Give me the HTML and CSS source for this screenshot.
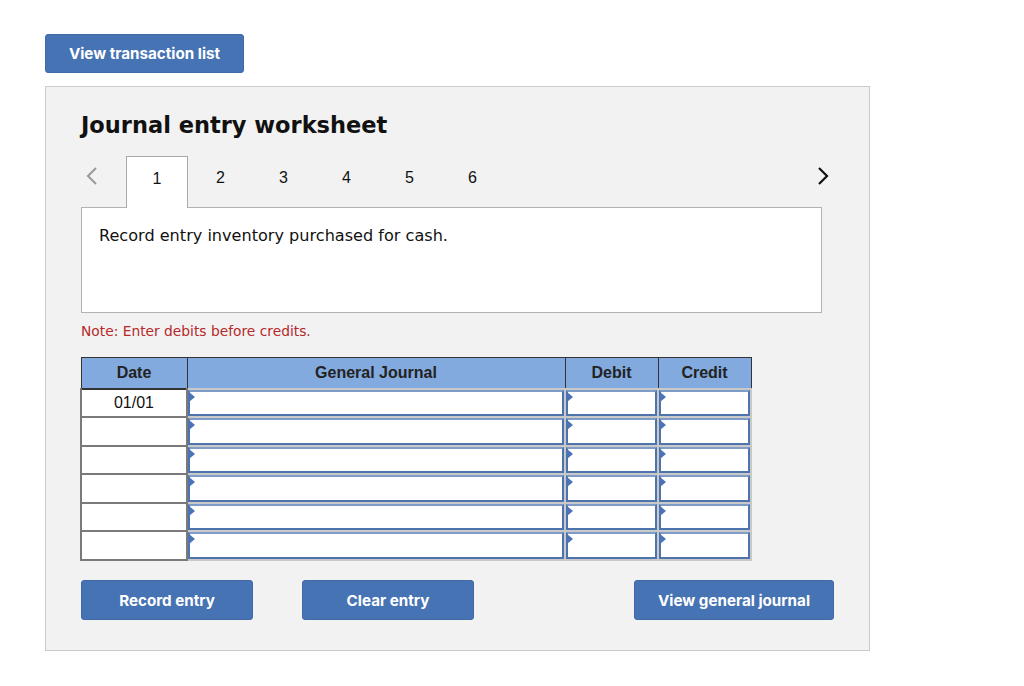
FILE: index.html
```html
<!DOCTYPE html>
<html>
<head>
<meta charset="utf-8">
<link rel="stylesheet" href="styles.css">
</head>
<body>
<div class="page">
  <button class="btn btn-top">View transaction list</button>
  <div class="panel">
    <h1 class="title">Journal entry worksheet</h1>
    <div class="tabs">
      <span class="arrow arrow-left"><svg width="12" height="20" viewBox="0 0 12 20"><path d="M10 2 L2 10 L10 18" fill="none" stroke="#999" stroke-width="2"/></svg></span>
      <div class="tab active">1</div>
      <div class="tab">2</div>
      <div class="tab">3</div>
      <div class="tab">4</div>
      <div class="tab">5</div>
      <div class="tab">6</div>
      <span class="spacer"></span>
      <span class="arrow arrow-right"><svg width="12" height="20" viewBox="0 0 12 20"><path d="M2 2 L10 10 L2 18" fill="none" stroke="#111" stroke-width="2.2"/></svg></span>
    </div>
    <div class="desc">Record entry inventory purchased for cash.</div>
    <p class="note">Note: Enter debits before credits.</p>
    <table class="journal">
      <thead>
        <tr><th class="c-date">Date</th><th class="c-gj">General Journal</th><th class="c-num">Debit</th><th class="c-num">Credit</th></tr>
      </thead>
      <tbody>
        <tr><td class="date">01/01</td><td class="in"><div class="box"></div></td><td class="in"><div class="box"></div></td><td class="in"><div class="box"></div></td></tr>
        <tr><td class="date"></td><td class="in"><div class="box"></div></td><td class="in"><div class="box"></div></td><td class="in"><div class="box"></div></td></tr>
        <tr><td class="date"></td><td class="in"><div class="box"></div></td><td class="in"><div class="box"></div></td><td class="in"><div class="box"></div></td></tr>
        <tr><td class="date"></td><td class="in"><div class="box"></div></td><td class="in"><div class="box"></div></td><td class="in"><div class="box"></div></td></tr>
        <tr><td class="date"></td><td class="in"><div class="box"></div></td><td class="in"><div class="box"></div></td><td class="in"><div class="box"></div></td></tr>
        <tr><td class="date"></td><td class="in"><div class="box"></div></td><td class="in"><div class="box"></div></td><td class="in"><div class="box"></div></td></tr>
      </tbody>
    </table>
    <div class="actions">
      <button class="btn btn-action">Record entry</button>
      <button class="btn btn-action btn-clear">Clear entry</button>
      <span class="spacer"></span>
      <button class="btn btn-view">View general journal</button>
    </div>
  </div>
</div>
</body>
</html>
```
FILE: styles.css
```css
* { box-sizing: border-box; }
html, body { margin: 0; padding: 0; background: #fff; }
.page {
  padding: 34px 0 0 45px;
  font-family: "Liberation Sans", Arial, sans-serif;
}
.btn {
  background: #4673b3;
  color: #fff;
  border: 1px solid #4069a6;
  border-radius: 3px;
  font-family: Inter, "Liberation Sans", Arial, sans-serif;
  font-weight: 700;
  font-size: 15.2px;
  cursor: pointer;
  padding: 0;
}
.btn-top { width: 199px; height: 39px; display: block; }
.panel {
  margin-top: 13px;
  width: 825px;
  height: 565px;
  background: #f2f2f2;
  border: 1px solid #cbcbcb;
  padding: 0 35px 0 35px;
}
.title {
  font-family: "DejaVu Sans", Verdana, sans-serif;
  font-weight: bold;
  font-size: 22.5px;
  margin: 25px 0 0 0;
  height: 44px;
  line-height: 26px;
  color: #111;
}
.tabs {
  display: flex;
  align-items: stretch;
  height: 51px;
  width: 748px;
}
.arrow { display: flex; align-items: center; height: 39px; }
.arrow-left { width: 45px; padding-left: 5px; }
.arrow-right { width: 12px; }
.spacer { flex: 1; }
.tab {
  width: 63px;
  padding-top: 13px;
  text-align: center;
  font-size: 16px;
  color: #111;
}
.tab.active {
  width: 62px;
  background: #fff;
  border: 1px solid #a9a9a9;
  border-bottom: none;
  margin-right: 1px;
  position: relative;
  z-index: 1;
  margin-bottom: -1px;
}
.desc {
  width: 741px;
  height: 106px;
  background: #fff;
  border: 1px solid #b3b3b3;
  padding: 18px 17px;
  font-family: "DejaVu Sans", Verdana, sans-serif;
  font-size: 16.1px;
  color: #111;
}
.note {
  margin: 10px 0 0 0;
  height: 35px;
  font-family: "DejaVu Sans", Verdana, sans-serif;
  font-size: 13.8px;
  color: #b52a2a;
  line-height: 16px;
}
.journal {
  border-collapse: collapse;
  width: 670px;
  margin-left: -1px;
  margin-top: -1px;
  table-layout: fixed;
}
.journal th {
  background: #82aade;
  border: 1.5px solid #333;
  height: 31px;
  font-size: 16px;
  font-weight: bold;
  color: #222;
  padding: 0;
}
.c-date { width: 106px; }
.c-gj { width: 378px; }
.c-num { width: 93px; }
.journal td {
  height: 28.6px;
  padding: 0;
  background: #fff;
}
.journal td.date {
  border: 2px solid #7a7a7a;
  border-top-color: #c8c8c8;
  text-align: center;
  font-size: 16px;
  color: #111;
  vertical-align: middle;
}
.journal tbody tr:first-child td.date { border-top: 2px solid #333; }
.journal td.in {
  border: 2px solid #c9c9c9;
  border-left: 2px solid #888;
  position: relative;
  background: #fff;
}
.box {
  position: absolute;
  inset: 0;
  border: 2px solid #4d74ad;
  border-top-color: #7f9cc8;
  background: #fff;
}
.box::before {
  content: "";
  position: absolute;
  left: -1px;
  top: 0;
  border-left: 6px solid #4a73b8;
  border-top: 5px solid transparent;
  border-bottom: 5px solid transparent;
}
.actions {
  display: flex;
  margin-top: 19px;
  width: 753px;
}
.btn-action { width: 172px; height: 40px; }
.btn-clear { margin-left: 49px; }
.btn-view { width: 200px; height: 40px; }
```
